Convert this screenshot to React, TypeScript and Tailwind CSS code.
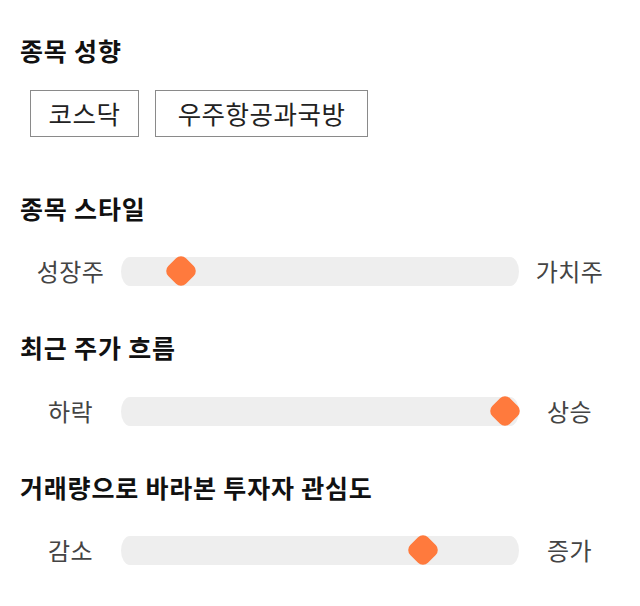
import React from 'react';

const FONT = { fontFamily: '"Noto Sans CJK KR", "Noto Sans", sans-serif' };

type SliderProps = {
  left: string;
  right: string;
  value: number; // 0 - 100
};

const Slider = ({ left, right, value }: SliderProps) => {
  return (
    <div className="flex items-center h-10">
      <div className="w-[101px] text-center text-[24px] tracking-[0.5px] text-[#444]">{left}</div>
      <div className="relative flex-1 h-[29px] bg-[#eeeeee] rounded-[9px/50%]">
        <div
          className="absolute top-1/2 -translate-x-1/2 -translate-y-1/2"
          style={{ left: `${value}%` }}
        >
          <div className="w-[25px] h-[25px] rotate-45 rounded-[7px] bg-[#ff7a3d]" />
        </div>
      </div>
      <div className="w-[101px] text-center text-[24px] tracking-[0.5px] text-[#444]">{right}</div>
    </div>
  );
};

const Heading = ({ children }: { children: React.ReactNode }) => (
  <h2 className="h-8 leading-8 text-[25px] tracking-[0.8px] font-bold text-[#111]">{children}</h2>
);

export default function App() {
  const tags = [
    { label: '코스닥', width: 'w-[109px]' },
    { label: '우주항공과국방', width: 'w-[213px]' },
  ];

  return (
    <div className="min-h-screen bg-white px-5 pt-[34px]" style={FONT}>
      <section>
        <Heading>종목 성향</Heading>
        <div className="flex gap-4 mt-6 ml-[10px]">
          {tags.map((tag) => (
            <div
              key={tag.label}
              className={`${tag.width} h-[47px] flex items-center justify-center border border-[#8a8a8a] text-[25.5px] tracking-[0.5px] text-[#222]`}
            >
              {tag.label}
            </div>
          ))}
        </div>
      </section>

      <section className="mt-[55px]">
        <Heading>종목 스타일</Heading>
        <div className="mt-[27px]">
          <Slider left="성장주" right="가치주" value={15} />
        </div>
      </section>

      <section className="mt-10">
        <Heading>최근 주가 흐름</Heading>
        <div className="mt-[28px]">
          <Slider left="하락" right="상승" value={96.5} />
        </div>
      </section>

      <section className="mt-10">
        <Heading>거래량으로 바라본 투자자 관심도</Heading>
        <div className="mt-[27px]">
          <Slider left="감소" right="증가" value={76} />
        </div>
      </section>
    </div>
  );
}
